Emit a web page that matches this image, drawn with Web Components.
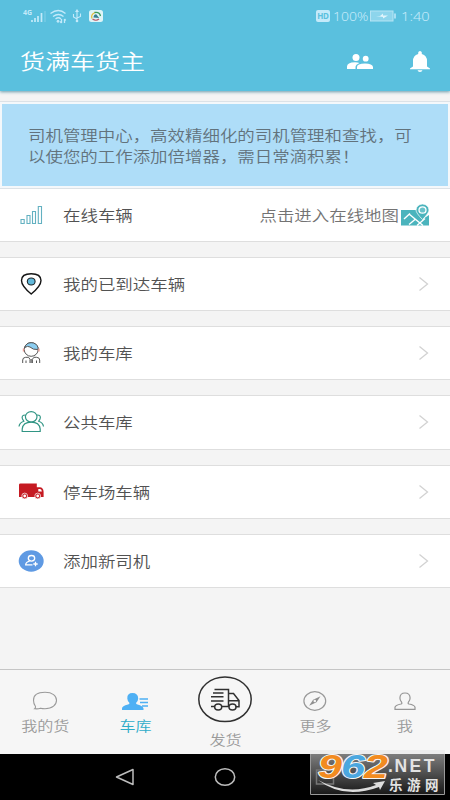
<!DOCTYPE html>
<html lang="zh">
<head>
<meta charset="utf-8">
<title>货满车货主</title>
<style>
html,body{margin:0;height:100%}
body{font-family:"Noto Sans CJK SC","Noto Sans",sans-serif;overflow:hidden;background:#f4f4f4}
</style>
</head>
<body>
<phone-screen></phone-screen>
<script>
const define=(name,html)=>customElements.define(name,class extends HTMLElement{
  constructor(){super();this.attachShadow({mode:'open'}).innerHTML=typeof html==='function'?html(this):html;}
});

define('wide-text',`<style>
:host{display:block;white-space:nowrap;width:max-content;transform:scaleX(var(--sx,1.163));transform-origin:var(--origin,left) center;font-weight:350}
</style><slot></slot>`);

define('status-bar',`<style>
:host{display:flex;height:32px;box-sizing:border-box;padding:0 21px 0 23px;align-items:center;color:#c4eafa;font:13px/16px "Noto Sans",sans-serif}
.l{flex:1;display:flex}svg{display:block}
.r{display:flex;align-items:center}
.p{width:37.500px;margin-left:3px}.t{width:28px;margin-left:4px}
wide-text{--sx:1.08}
</style>
<div class="l"><svg width="82" height="16" viewBox="0 0 82 16" fill="none" stroke="#c4eafa">
<text x="0" y="7" font-size="7" font-weight="700" font-family="Noto Sans" fill="#c4eafa" stroke="none">4G</text>
<path stroke-width="1.7" d="M9 14v-2M12 14v-4M15 14V8M18.5 14V5"/><path stroke-width="1" opacity=".4" d="M22 14V3"/>
<path stroke-width="1.3" d="M27.500 5.500q8-6 15 0M30 8.500q5.500-4 10.500 0M32.500 11q3-2.400 5.500 0M38.500 11v4m-1.500-1.500l1.500 1.500M41.500 15v-4m1.200 1.500l-1.200-1.500"/><circle cx="35" cy="13.300" r="1" fill="#c4eafa"/>
<path stroke-width="1.100" d="M54 13V3M54 11l-3.500-2V6M54 10l3.500-1.500V5.500"/><path d="M52 4l2-3 2 3z" fill="#c4eafa" stroke="none"/><circle cx="54" cy="13" r="1.300" fill="#c4eafa" stroke="none"/>
<rect x="66" y="2" width="14" height="12" rx="2.500" fill="#def4f7" stroke="none"/>
<path stroke="#bc5360" stroke-width="1.200" d="M69.500 11q3.500 2.500 6.500 0"/><path stroke="#e6bb36" stroke-width="1.200" d="M69 10.500q-1.500-4 3-6"/><path stroke="#3c9b5b" stroke-width="1.300" d="M71.500 4.500q5-1 6 3.500"/><path d="M70.500 9.500q0-3 2.700-3.300l3 3.800z" fill="#377e91" stroke="none"/>
</svg></div>
<div class="r"><svg width="14" height="12" viewBox="0 0 14 12"><rect width="14" height="12" rx="2" fill="#c4eafa"/><text x="1.200" y="9" font-size="8" font-weight="700" textLength="11.600" font-family="Noto Sans" fill="#5ac0de">HD</text></svg>
<div class="p"><wide-text>100%</wide-text></div>
<svg width="27" height="12" viewBox="0 0 27 12"><rect x=".5" y="1" width="22.500" height="10" fill="#8dd5ec" stroke="#b6e4f4"/><path d="M6 6h4l3-2.500V5.500h5l-5 3V7z" fill="#e1f5fc"/><path d="M25 3.500v5" stroke="#c4eafa" stroke-width="1.500"/></svg>
<div class="t"><wide-text style="--sx:1.13">1:40</wide-text></div></div>`);

define('app-header',`<style>
:host{display:block;height:91px;background:#5ac0de;box-shadow:0 1px 3px #6a9baa;position:relative;z-index:1}
.bar{height:59px;display:flex;align-items:center;padding:0 19px 0 20px;color:#fff}
wide-text{flex:none;font-size:21px;line-height:30px;--sx:1.19;margin-bottom:3px}
.s{flex:1}svg{display:block}.u{margin-right:36px}
</style>
<status-bar></status-bar>
<div class="bar"><wide-text>货满车货主</wide-text><div class="s"></div>
<svg class="u" width="26" height="15" viewBox="0 0 26 15" fill="#fff"><circle cx="9" cy="3.500" r="3.500"/><circle cx="18.700" cy="4.700" r="2.900"/><path d="M0 15v-2.500q0-4 8-4.200 2.500 0 4.500.7-4 1.700-4 4V15zM10 15v-2q0-3.500 8-3.500 7.500 0 8 3.500v2z"/></svg>
<svg width="22" height="21" viewBox="0 0 22 21" fill="#fff"><path d="M9.200 3V1.500Q9.500 0 11 0t1.800 1.500V3Q18 4.500 18 10v5.500l3 2v.8H1v-.8l3-2V10Q4 4.500 9.200 3zM8.500 19.200h5Q13 21 11 21t-2.500-1.800z"/></svg></div>`);

define('info-banner',`<style>
:host{display:block;margin-top:10px;border:1px solid #dce2e7;border-width:1px 0;padding:2px 2px 2px;background:#f4f8fb}
.b{height:82px;background:#aeddf8;box-sizing:border-box;padding:20px 0 0 26px;color:#62727c;font-size:15px;line-height:21px}
</style><div class="b"><slot></slot></div>`);

define('list-row',`<style>
:host{display:flex;box-sizing:border-box;height:54.200px;align-items:center;background:#fff;border:1px solid #dedede;border-width:1px 0;margin-bottom:15px;padding:0 20px 0 16px;color:#525252;font-size:15px;line-height:22px}
:host([first]){height:53px;border-top:0}
.icon{width:30px;height:30px;margin-right:16.500px;flex:none}.s{flex:1}
</style><div class="icon"><slot name="icon"></slot></div><wide-text><slot></slot></wide-text><div class="s"></div><slot name="end"></slot>`);

define('row-chevron',`<style>:host{display:block}svg{display:block}</style><svg width="12" height="16" viewBox="0 0 12 16" fill="none" stroke="#d2d2d2" stroke-width="1.300"><path d="M1.500 1.500L9.500 8 1.500 14.500"/></svg>`);

define('map-link',`<style>
:host{display:flex;align-items:center;color:#737373;font-size:15px}wide-text{--origin:right;margin-right:1.500px}svg{display:block}
</style><wide-text><slot></slot></wide-text><svg width="29" height="22" viewBox="0 0 29 22"><path d="M0 6h17q0 4 5 9l6-4v10.500H0z" fill="#4bb4bd"/><path fill="none" stroke="#fff" stroke-width="1.400" d="M3 15l6-5.500M8 10l14 11.500M8 20.500l6-5M16 21.500l8-7"/><path d="M21.500 15.500Q15 9 15 6a6.500 6 0 0 1 13 0q0 3-6.500 9.500z" fill="#4bb4bd" stroke="#fff" stroke-width=".7"/><ellipse cx="21.500" cy="6" rx="3.500" ry="3.200" fill="#68c2ca" stroke="#fff" stroke-width="1.300"/></svg>`);

const icons={
signal:`<g fill="none" stroke="#63b1c1" stroke-width="1.100"><path d="M5 19.500h3.200v4H5zM11 15.500h3v8h-3zM16.500 11.500h3v12h-3zM22.300 6.500h3.200v17h-3.200z"/></g>`,
pin:`<path d="M15.200 25Q5.500 17 5.500 11.500 5.500 4.800 15.200 4.800T25 11.500Q25 17 15.200 25z" fill="#fff" stroke="#151515" stroke-width="1.400"/><ellipse cx="15.200" cy="12.500" rx="3.900" ry="3.500" fill="#62b9db" stroke="#20262a" stroke-width="1.100"/>`,
driver:`<g fill="none" stroke="#555" stroke-width="1"><ellipse cx="15.200" cy="11.500" rx="7" ry="6.800"/><path d="M8.800 9.500Q10 4.700 15.200 4.700q5.500 0 7 5.300l-.5 1.500Q17 12 14 9q-2.500-1.500-5.200.5z" fill="#8bcdf0"/><path d="M6.700 25v-3q0-2.500 3-2.700h2.800l1.500 2v3.700M23.700 25v-3q0-2.500-3-2.700h-2.800l-1.500 2V25M10 22.500V25M20.500 22.500V25M15.200 21v4"/></g><path d="M7.500 10.500v3M22.900 10.500v3" stroke="#e79a92" stroke-width="1.400"/>`,
group:`<g fill="none" stroke="#319584" stroke-width="1.200"><ellipse cx="15.200" cy="9.800" rx="5.800" ry="5.200"/><path d="M6.200 24.500v-2.500Q7 15.200 15.200 15.200t9 6.800v2.500zM9.500 8Q5 8 6.500 12l1.300 2.200Q3.500 15.500 3 19.500M21 8q4.500 0 3 4l-1.300 2.200q4.300 1.300 4.800 5.300"/></g>`,
truck:`<path d="M3 7.700Q3 6.500 4.500 6.500H20.800v3.800h3q3.500 0 3.800 4.500V20H3z" fill="#c51a22"/><path d="M22.300 12h1.800q1.500 0 1.800 2.500h-3.600z" fill="#fff"/><g fill="#c51a22" stroke="#fff" stroke-width=".7"><circle cx="8.700" cy="19" r="2.900"/><circle cx="21.700" cy="19" r="2.900"/></g><circle cx="8.700" cy="19" r="1.400" fill="#fff"/><circle cx="21.700" cy="19" r="1.400" fill="#fff"/>`,
add:`<ellipse cx="15.200" cy="15" rx="12.500" ry="10.700" fill="#5f9ae3"/><g fill="none" stroke="#fff" stroke-width="1.300"><ellipse cx="15.500" cy="12.300" rx="3.200" ry="2.800"/><path d="M16.500 18.800H9.700q0-2.500 4-3.800M19.500 15.800v4.400M17.300 18h4.400"/></g>`,
chat:`<path fill="none" stroke="#9a9a9a" stroke-width="1.100" d="M5.500 20.500q-2-2.500-2-6.200C3.500 9.500 7.500 6.300 15 6.300s11.500 3.500 11.500 8-4 8.400-11.500 8.400q-2.500 0-4.500-.5-2.500 1-5.800.6Q5.700 22 5.500 20.500z"/>`,
person:`<path fill="#4eb0f4" d="M2 24v-1.500q0-2.500 6-4 1.500-.5 1.500-1.500-2-1.500-2.200-4.500Q7 7 12.500 7t5.700 5.500Q18 15.500 16 17q0 1 1.500 1.500 5.500 1.500 6 4V24z"/><path d="M19.500 13h8.500M20 16.500h8M22 20h6" stroke="#4eb0f4" stroke-width="1.300"/>`,
compass:`<ellipse cx="14.800" cy="15" rx="10.900" ry="9.300" fill="none" stroke="#999" stroke-width="1.200"/><path d="M20.500 10.300l-4 6-7.400 3.500 4-6z" fill="#8f8f8f"/><circle cx="14.800" cy="15" r="1.300" fill="#f6f6f6"/>`,
me:`<path fill="none" stroke="#969696" stroke-width="1.200" d="M5 23.300v-2.200q.5-2 6-3.100 1.500-.5.500-2-1.600-1.800-1.600-4Q10 7 15 7t5.100 5q0 2.200-1.600 4-1 1.500.5 2 5.500 1 6 3.100v2.200z"/>`
};
define('app-icon',el=>`<style>:host,svg{display:block}</style><svg width="30" height="30" viewBox="0 0 30 30">${icons[el.getAttribute('name')]}</svg>`);

define('tab-item',`<style>
:host{display:flex;flex-direction:column;align-items:center;width:90px;color:#9b9b9b;font-size:13.500px;line-height:20px;padding-top:15.500px;box-sizing:border-box;--origin:center}
:host([active]){color:#2eacc9}:host([main]){padding-top:6px}
wide-text{--sx:1.19;margin-top:-.5px}
</style><slot name="icon"></slot><wide-text><slot></slot></wide-text>`);

define('ship-button',`<style>:host,svg{display:block}:host{margin-bottom:6.500px}</style><svg width="54" height="47" viewBox="0 0 54 47" fill="none" stroke="#303030" stroke-width="1.500"><ellipse cx="27" cy="23.300" rx="26.200" ry="22.300"/><path d="M16.500 13.500h14v16.200M30.500 17.500h5l5.500 7v6.300h-3.500M13 30.500h4M23.500 30.500H31M15 17h10.500M13 20.700h12.500M13 25h12.500M31 24.700h9.500"/><ellipse cx="20.200" cy="31" rx="3.500" ry="3"/><ellipse cx="34.500" cy="31" rx="3.500" ry="3"/></svg>`);

define('tab-bar',`<style>:host{display:flex;height:85px;box-sizing:border-box;border-top:1px solid #c5c5c5;background:#f6f6f6}</style><slot></slot>`);

define('nav-bar',`<style>:host{display:flex;height:46px;background:#000;align-items:center;justify-content:center}svg{display:block}</style>
<svg width="220" height="22" viewBox="0 0 220 22" fill="none" stroke="#bdbdbd" stroke-width="1.500"><path d="M18 3.500v15L1.500 11z" stroke-linejoin="round"/><ellipse cx="110" cy="11" rx="9.700" ry="8.300"/></svg>`);

define('site-mark',`<style>:host{position:absolute;left:310px;top:750px;display:block}svg{display:block;overflow:visible}</style>
<svg width="136" height="45" viewBox="0 0 136 45"><defs><linearGradient id="g" x2="0" y2="1"><stop stop-color="#7d7d7d"/><stop offset=".5" stop-color="#4c4c4c"/><stop offset="1" stop-color="#181818"/></linearGradient></defs>
<rect x=".5" y="4" width="134" height="40.500" fill="url(#g)"/><path d="M0 0h135v4H0z" fill="#ededed"/><path d="M.5 4v40.500h134V4" fill="none" stroke="#999"/><rect x="6.500" y="20" width="17" height="14" fill="none" stroke="#777" stroke-width="1.500"/>
<g font-family="Liberation Sans" font-weight="700" font-style="italic" font-size="34" stroke="#f6f6f6" stroke-width="2" paint-order="stroke" stroke-linejoin="round"><text x="8" y="28" textLength="24" lengthAdjust="spacingAndGlyphs" fill="#f28b20">9</text><text x="31" y="28" textLength="24" lengthAdjust="spacingAndGlyphs" fill="#4ba7df">6</text><text x="54" y="28" textLength="24" lengthAdjust="spacingAndGlyphs" fill="#f28b20">2</text></g>
<text x="78" y="22" dx="0 1.500 2.500 2.500" font-family="Liberation Sans" font-weight="700" font-size="17.500" fill="#e3e3e3">.NET</text>
<path d="M8 30q29 16 58 5l-3-2 12-2-5 9-1-3Q34 50 8 30z" fill="#dedede"/>
<text x="79" y="39.500" dx="0 4.500 4.500" font-family="Noto Sans CJK SC" font-weight="700" font-size="13.500" fill="#e3e3e3">乐游网</text></svg>`);

define('phone-screen',`<style>
:host{display:flex;flex-direction:column;width:450px;height:800px;background:#f4f4f4;position:relative;overflow:hidden}
main{flex:1;min-height:0}
</style>
<app-header></app-header>
<main>
<info-banner><wide-text>司机管理中心，高效精细化的司机管理和查找，可</wide-text><wide-text>以使您的工作添加倍增器，需日常滴积累！</wide-text></info-banner>
<list-row first><app-icon slot="icon" name="signal"></app-icon>在线车辆<map-link slot="end">点击进入在线地图</map-link></list-row>
<list-row><app-icon slot="icon" name="pin"></app-icon>我的已到达车辆<row-chevron slot="end"></row-chevron></list-row>
<list-row><app-icon slot="icon" name="driver"></app-icon>我的车库<row-chevron slot="end"></row-chevron></list-row>
<list-row><app-icon slot="icon" name="group"></app-icon>公共车库<row-chevron slot="end"></row-chevron></list-row>
<list-row><app-icon slot="icon" name="truck"></app-icon>停车场车辆<row-chevron slot="end"></row-chevron></list-row>
<list-row><app-icon slot="icon" name="add"></app-icon>添加新司机<row-chevron slot="end"></row-chevron></list-row>
</main>
<tab-bar>
<tab-item><app-icon slot="icon" name="chat"></app-icon>我的货</tab-item>
<tab-item active><app-icon slot="icon" name="person"></app-icon>车库</tab-item>
<tab-item main><ship-button slot="icon"></ship-button>发货</tab-item>
<tab-item><app-icon slot="icon" name="compass"></app-icon>更多</tab-item>
<tab-item><app-icon slot="icon" name="me"></app-icon>我</tab-item>
</tab-bar>
<nav-bar></nav-bar>
<site-mark></site-mark>`);
</script>
</body>
</html>
